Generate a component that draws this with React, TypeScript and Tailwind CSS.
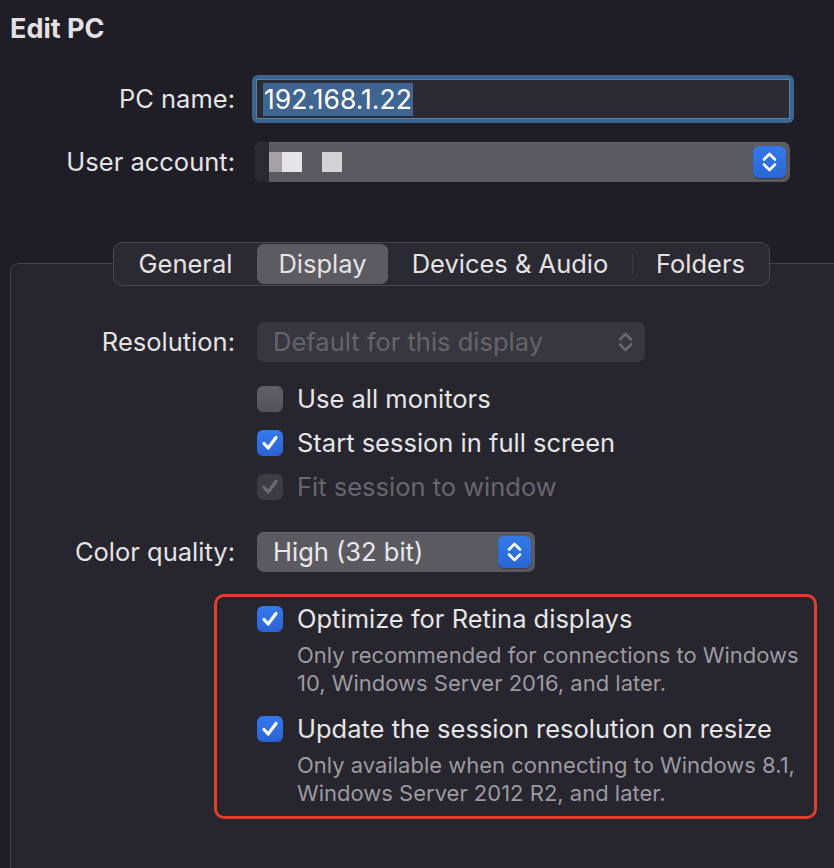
import { ReactElement } from "react";

const Chevrons = ({ color }: { color: string }) => (
  <svg width="31" height="32" viewBox="0 0 31 32" fill="none">
    <path d="M10 13.5 L15.5 8 L21 13.5" stroke={color} strokeWidth="2.6" strokeLinecap="round" strokeLinejoin="round" />
    <path d="M10 18.5 L15.5 24 L21 18.5" stroke={color} strokeWidth="2.6" strokeLinecap="round" strokeLinejoin="round" />
  </svg>
);

const Stepper = () => (
  <div className="flex h-[32px] w-[33px] items-center justify-center rounded-[6px] bg-gradient-to-b from-[#3479e8] to-[#2a66d4] shadow-[0_1px_1px_rgba(0,0,0,0.35)]">
    <Chevrons color="#ffffff" />
  </div>
);

const Check = ({ color }: { color: string }) => (
  <svg width="26" height="26" viewBox="0 0 26 26" fill="none">
    <path d="M7 13.5 L11.2 18 L19 7.5" stroke={color} strokeWidth="3.2" strokeLinecap="round" strokeLinejoin="round" />
  </svg>
);

type BoxKind = "off" | "on" | "disabled";

const CheckRow = ({ kind, label }: { kind: BoxKind; label: string }) => {
  const box =
    kind === "on"
      ? "bg-gradient-to-b from-[#3479ee] to-[#2a63d3]"
      : kind === "disabled"
        ? "bg-[#3e3c43]"
        : "bg-gradient-to-b from-[#616066] to-[#55535a]";
  return (
    <div className="flex h-[44px] items-center">
      <div className={`flex h-[26px] w-[26px] items-center justify-center rounded-[6px] ${box}`}>
        {kind === "on" && <Check color="#ffffff" />}
        {kind === "disabled" && <Check color="#6e6c72" />}
      </div>
      <span className={`ml-[14px] whitespace-nowrap text-[25.5px] ${kind === "disabled" ? "text-[#68666d]" : "text-[#e6e5e8]"}`}>
        {label}
      </span>
    </div>
  );
};

const Label = ({ children, w }: { children: string; w: string }) => (
  <div className={`${w} shrink-0 text-right text-[25.5px] text-[#e4e3e6]`}>{children}</div>
);

const tabs = [
  { name: "General", w: "w-[143px]" },
  { name: "Display", w: "w-[131px]" },
  { name: "Devices & Audio", w: "w-[244px]" },
  { name: "Folders", w: "w-[137px]" },
];

export default function App(): ReactElement {
  return (
    <div className="flex h-[868px] w-[834px] flex-col overflow-hidden bg-[#1f1d25] font-['Inter','Noto_Sans',sans-serif] text-[#e4e3e6]">
      <h1 className="pl-[10px] pt-[13px] text-[27px] font-bold leading-[32px] text-[#e2e1e4]">Edit PC</h1>

      {/* PC name */}
      <div className="mt-[30px] flex h-[48px] items-center">
        <Label w="w-[235px]">PC name:</Label>
        <div className="ml-[17px] h-[48px] w-[542px] rounded-[6px] bg-[#3a6592] p-[4px]">
          <div className="flex h-full items-center border border-[#5b80a8] bg-[#2c2a33] pl-[6px]">
            <span className="bg-[#3f6690] px-[1px] text-[26.5px] leading-[33px] text-white">192.168.1.22</span>
          </div>
        </div>
      </div>

      {/* User account */}
      <div className="mt-[19px] flex h-[40px] items-center">
        <Label w="w-[235px]">User account:</Label>
        <div className="ml-[20px] flex h-[40px] w-[535px] items-center justify-between rounded-[7px] bg-[#5c5a61] pr-[4px] shadow-[inset_0_1px_0_rgba(255,255,255,0.08)]">
          <div className="flex h-full items-center">
            <div className="h-[40px] w-[14px] rounded-l-[7px] bg-[#2a2830]" />
            <div className="h-[20px] w-[13px] bg-[#a4a2a7]" />
            <div className="h-[20px] w-[20px] bg-[#e5e4e6]" />
            <div className="h-[20px] w-[20px] bg-[#5c5a61]" />
            <div className="h-[20px] w-[20px] bg-[#d3d2d5]" />
          </div>
          <Stepper />
        </div>
      </div>

      {/* Panel */}
      <div className="ml-[10px] mt-[81px] flex-1 rounded-tl-[9px] border-l border-t border-[#46444b] bg-[#27252d]">
        <div className="-mt-[22px] ml-[102px] flex h-[44px] w-[657px] items-center rounded-[9px] border border-[#4a484f] bg-[#2b2931] text-[25.5px] text-[#e4e3e6]">
          {tabs.map((t, i) => (
            <div key={t.name} className={`relative flex h-[40px] items-center justify-center ${t.w} ${i === 1 ? "rounded-[7px] bg-[#5d5b62]" : ""}`}>
              {t.name}
              {i === 3 && <div className="absolute left-0 top-[10px] h-[20px] w-[1px] bg-[#3d3b42]" />}
            </div>
          ))}
        </div>

        {/* Resolution */}
        <div className="mt-[36px] flex h-[40px] items-center">
          <Label w="w-[224px]">Resolution:</Label>
          <div className="ml-[22px] flex h-[40px] w-[388px] items-center justify-between rounded-[7px] bg-[#38363e] pl-[16px] pr-[4px]">
            <span className="text-[25.5px] text-[#66646b]">Default for this display</span>
            <Chevrons color="#6a686f" />
          </div>
        </div>

        <div className="ml-[246px] mt-[15px] flex flex-col">
          <CheckRow kind="off" label="Use all monitors" />
          <CheckRow kind="on" label="Start session in full screen" />
          <CheckRow kind="disabled" label="Fit session to window" />
        </div>

        {/* Color quality */}
        <div className="mt-[23px] flex h-[40px] items-center">
          <Label w="w-[224px]">Color quality:</Label>
          <div className="ml-[22px] flex h-[40px] w-[278px] items-center justify-between rounded-[7px] bg-[#5c5a61] pl-[16px] pr-[4px] shadow-[inset_0_1px_0_rgba(255,255,255,0.08)]">
            <span className="text-[25.5px] text-[#e8e7ea]">High (32 bit)</span>
            <Stepper />
          </div>
        </div>

        {/* Highlighted options */}
        <div className="ml-[203px] mt-[22px] w-[603px] rounded-[10px] border-[3px] border-[#e43d2b] pb-[9px] pl-[40px]">
          <CheckRow kind="on" label="Optimize for Retina displays" />
          <p className="whitespace-nowrap pl-[40px] text-[22px] leading-[28px] text-[#9c9aa0]">
            Only recommended for connections to Windows
            <br />
            10, Windows Server 2016, and later.
          </p>
          <div className="mt-[10px]">
            <CheckRow kind="on" label="Update the session resolution on resize" />
          </div>
          <p className="whitespace-nowrap pl-[40px] text-[22px] leading-[28px] text-[#9c9aa0]">
            Only available when connecting to Windows 8.1,
            <br />
            Windows Server 2012 R2, and later.
          </p>
        </div>
      </div>
    </div>
  );
}
